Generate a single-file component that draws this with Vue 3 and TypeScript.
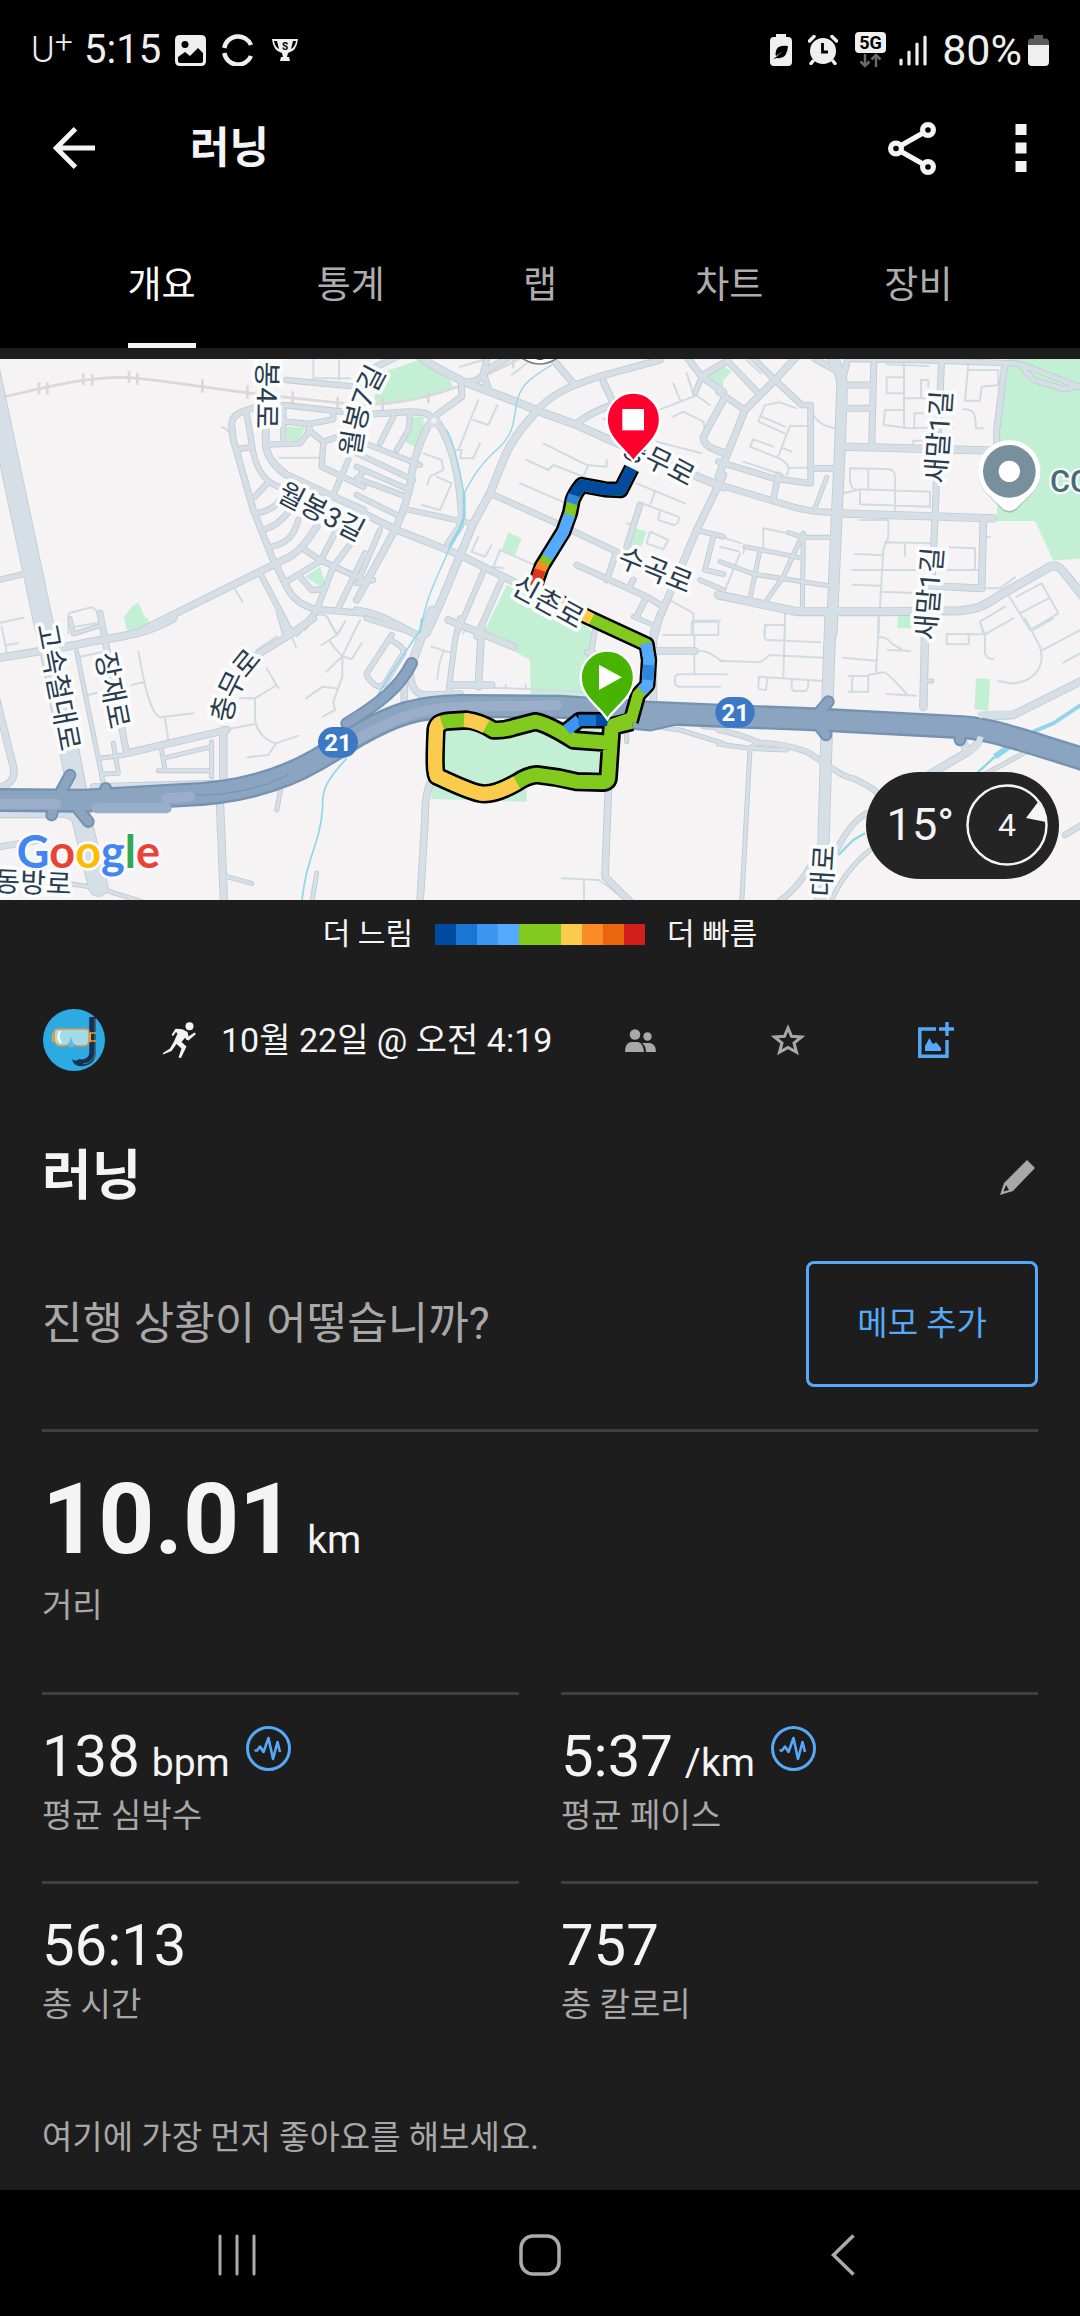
<script setup lang="ts">
import { ref } from 'vue'

interface Stroke { w: number; d: string }
interface Block { x: number; y: number; roads: Stroke[]; lanes: string; parks: string; rivers: Stroke[] }
interface RoadLabel { text: string; d: string }
interface Metric { value: string; unit?: string; label: string; chart?: boolean }

const tabs: string[] = ['개요', '통계', '랩', '차트', '장비']
const activeTab = ref<string>('개요')

const paceColors: string[] = [
  '#004a9f', '#1976d2', '#3c96f2', '#55a9ff', '#82ca1e',
  '#82ca1e', '#fbcb4d', '#fa8b26', '#ea650d', '#d3201f',
]

const metrics: Metric[] = [
  { value: '138', unit: 'bpm', label: '평균 심박수', chart: true },
  { value: '5:37', unit: '/km', label: '평균 페이스', chart: true },
  { value: '56:13', label: '총 시간' },
  { value: '757', label: '총 칼로리' },
]

// Street geometry, one block per map section
const blocks: Block[] = [
  {
    x: 0, y: 0,
    parks: 'M860 230 915 232 895 272 860 270ZM915 680 960 650 970 680 975 700 965 712ZM372 800 395 770 415 757 445 825V840H380Z',
    rivers: [],
    roads: [
      { w: 56, d: 'M-45-10 135 840' },
      { w: 14, d: 'M-10 692 70 672' },
      { w: 16, d: 'M765 172C720 185 695 195 695 225L700 270 760 480 815 620 860 710C880 750 910 770 950 778L1090 790' },
      { w: 14, d: 'M740 190 760 310C775 370 800 400 840 412M715 297 750 292M800 402 765 440M840 450C820 480 790 487 765 490M870 480C840 520 810 535 785 540M895 510C880 560 860 580 815 590' },
      { w: 18, d: 'M797 230V285C800 320 830 355 860 375L1000 440 1090 480' },
      { w: 14, d: 'M805 284 900 280 930 240 925 222 1000 208V190M850 280V165L1090 192M860 215 925 222M925 240 970 275 1090 235M970 275 965 350 1090 410M1045 330 1000 435M1090 360 1070 400' },
      { w: 18, d: 'M430 838 780 665 850 630C900 610 930 560 950 530' },
      { w: 14, d: 'M915 600 960 630 1090 690M860 695 950 640M1010 540 960 635M1060 570 1000 650 950 780M1095 610 1015 775M900 680 935 720 965 718M780 670 875 850M950 780C930 810 910 830 890 850' },
      { w: 14, d: 'M858 90 1090 112' },
    ],
    lanes: 'M940 30V85H1050M1017 30V90M665 232C685 235 690 250 695 265M838 323H960M700 710 728 755M205 850V795Q205 790 210 788L275 772C295 780 300 800 307 850M215 832 290 820M0 818 70 803M890 840 940 800Q980 780 990 820L1010 850M1035 815 1015 850',
  },
  {
    x: 1080, y: 0,
    parks: 'M40 160 60 70 190 25 270 90 280 112C230 140 150 160 40 160ZM155 200H190L192 240 165 290 135 275ZM445 547 485 565 465 618 425 600ZM825 535 860 545 840 600 800 590ZM440 705 650 800 700 850 690 1040 512 1032 510 930 465 905 370 850ZM1090 45 1025 78 1090 110Z',
    rivers: [
      { w: 4, d: 'M575 45C500 90 480 110 470 160C460 220 460 250 420 290C350 350 330 400 312 430M270 590C230 690 200 730 180 850M260 240C280 270 290 330 300 370L312 430' },
      { w: 9, d: 'M312 430V500L300 535 270 590' },
    ],
    roads: [
      { w: 20, d: 'M180 20C230 60 270 70 310 95L480 160 540 185 650 225 760 275 880 325 1090 412' },
      { w: 16, d: 'M30 60 110 20M310 95C340 100 360 90 380 60L450 20M380 30 370 70 385 115M305 100V140L230 195M40 192 150 185C190 185 210 190 220 212' },
      { w: 18, d: 'M235 220C280 290 300 380 305 500L300 530 265 580M205 225C170 290 155 350 148 420L130 480 110 530-10 750M-10 480 110 540 300 615 430 680 470 700' },
      { w: 13, d: 'M150 190 145 240 110 300M100 200 60 280M-10 270 180 345M-10 310 160 390M-10 350 150 420M-10 385 140 440M-10 435 120 500M140 478 335 520M370 665 295 840M60 540 0 680M-10 700 40 690' },
      { w: 20, d: 'M520 195C470 250 445 290 430 330L390 430 340 520 245 750 200 850' },
      { w: 15, d: 'M390 430 590 520 770 605M840 465 800 590M770 605 740 690M650 645 860 740 910 770M860 740 830 800M425 690 350 860M265 810 380 855M820 690 805 715' },
      { w: 17, d: 'M520 195C570 130 640 100 770 65L900 30M580 30 640 100M730 95 760 160M650 220C690 190 740 170 770 160M980 20 1025 80 1090 125M1090 40 1025 78M1090 150 1030 260C1030 290 1060 295 1090 310' },
      { w: 18, d: 'M1090 375 1010 540 900 800 880 850M-10 780C60 790 100 820 180 860' },
      { w: 12, d: 'M1010 540 1090 560M1060 560 1035 660 1090 672M1020 690 1090 720M1025 80 1005 130' },
    ],
    lanes: 'M355 150 295 300M340 210 385 225 412 165M300 50 370 30M455 75 500 40M550 280 680 345 740 350V330M500 330 565 360 580 345 670 380 685 345M480 400 620 460M830 400 975 460M885 425 870 465M845 460 900 480 955 500C960 515 950 525 940 525L895 510 900 480M870 545 925 570 910 598 860 580ZM355 560 335 605 375 620 395 585M420 600 535 650M420 600 400 650 430 655M190 310 245 330 250 360 210 380 202 403M230 380 275 400 240 480 185 465M285 300H305L300 325 340 325 360 280M940 100 960 150M980 70 1000 130 1050 165M870 190 1000 140M940 200 970 185 1030 215 1040 260M890 275 1025 310M930 750 1000 790V850M1000 812H1080M730 205 760 225M800 520 820 525',
  },
  {
    x: 2160, y: 0,
    parks: 'M860 27H1090V625L1000 632 945 513H830L840 200ZM0 40 35 65 0 100ZM535 795H575V835H532Z',
    rivers: [],
    roads: [
      { w: 30, d: 'M335 20Q370 80 366 110L360 290 350 500 335 850' },
      { w: 16, d: 'M285 27 345 60M385 20 370 80M462 20 455 290M370 105H455M370 175H455M665 20 645 500 630 850M855 40 830 240V300M0 405 200 465C260 485 300 485 350 488' },
      { w: 20, d: 'M370 290 820 302M360 490 820 505' },
      { w: 14, d: 'M380 27 600 30 880 40C910 40 940 60 1090 115M905 50 940 90 1035 118 1090 105' },
      { w: 18, d: 'M790 510 785 715 640 708M230 20 165 90 75 180-5 380' },
      { w: 22, d: 'M-5 735 90 755 230 785 500 785 720 782C790 775 800 760 850 730L990 650C1020 640 1025 660 1090 740' },
      { w: 15, d: 'M95 20 165 90 245 165 272 165V400L160 385-5 335M20 30 120 135M-5 125 75 180M175 375 160 445M275 355H350M-5 300 20 310' },
      { w: 10, d: 'M320 382 285 475M205 548 250 562H330M75 590 250 625M0 635 100 672 330 708M250 550 247 775M250 550 190 680 130 765M120 600 90 745' },
    ],
    lanes: 'M80 30 122 70M115 215 135 165 180 157 230 175M120 198 195 230M210 228H260M115 215 195 250M210 228 175 318M90 290 100 268 160 290M185 293 215 305M90 290 170 322C200 335 215 350 200 375M70 335 190 375M205 353H265M280 195C300 225 320 230 350 235M500 43 625 48M552 30V235M550 82H500V130H550M555 145H620M603 140V90H625V110M550 180H495L490 225 570 235 700 230M583 230V190H610M745 40 735 152H780L785 110 835 105V60H745M730 178C770 178 765 200 768 235H790M580 280V272H700M370 430 420 418 630 425V470L420 463V418M390 395V355L500 357C530 358 525 380 525 400V480M390 395C395 415 400 418 410 420M445 358V415M418 510H505V560L490 600 480 770M495 577 640 580M555 580V618M405 612 490 616M398 660 780 660M398 704 480 707M690 592 765 595V655M485 725 600 730M0 560 65 580M0 590 55 604M130 600V535L195 548M75 590 70 610M60 610 15 720M790 561H810M790 850 780 815 855 770M865 735 930 840M890 740 965 700 1015 790 930 840M900 790 985 745M800 715H840L885 682M135 850V825H195M195 790V850M475 800V850',
  },
  {
    x: 0, y: 810,
    parks: 'M372-5H445V15L385 32Z',
    rivers: [{ w: 5, d: 'M1040 415C980 480 965 510 968 560C960 680 920 700 905 850' }],
    roads: [
      { w: 56, d: 'M135 20 225 480 245 600 295 800' },
      { w: 20, d: 'M-10 115 200 80 300 60C430 42 475 20 520-5M670 330V500M660 550 672 850' },
      { w: 18, d: 'M380 400 680 330M-10 240 40 440C50 480 20 500-10 505M940-5 860 50 770 105M840-20 860 50' },
      { w: 16, d: 'M300-20 380 400M-10 584H150Q200 575 230 600M-10 682 110 662M280 500 650 490' },
      { w: 10, d: 'M230 95 310 490M340 370 355 460 310 462M300 415 375 405M485 390 495 450M490 415 635 380M475 452H635M635 365V470M842 510 830 570M680 770 755 790M950 760 935 850M200 790 300 805 440 850M210-5 220 42 300 17' },
    ],
    lanes: 'M415 95C430 180 450 280 480 292L580 280M395 195 435 185M495 295 505 360M5 20 20 95M20 75 55 70M265 225 290 218M240 110 310 95M800 145 835 205M830 195 765 235H720M765 235V300C770 330 790 360 828 370L895 347M828 370 805 405 742 412M680 328 765 312M870 40 888 80M770 90 830 50M915 30 945-5M985-5 1010 45 965 75M1010 45 1035 5M990 65C1010 95 1020 100 1027 108L980 155M1027 105V170L1000 245 1005 270 968 290M1010 205 968 200 918 235M1080 0 1027 108 1055 118 1085 70',
  },
  {
    x: 1080, y: 810,
    parks: 'M230 320H720V460L500 490V545L213 537Z',
    rivers: [{ w: 5, d: 'M185-5 180 30C150 80 100 140 45 240' }],
    roads: [
      { w: 22, d: 'M215-30 155 130' },
      { w: 13, d: 'M20-5 180 45M95 45 20 160Q20 175 45 195 60 205 75 190L130 100Q135 80 90 60M300-5 285 60 265 220M705 30 690 120M680 97H700' },
      { w: 18, d: 'M265 0 460 80M365 20 355 200M270 195H395M900-15 880 60V250M880 93H1005M150 140C150 200 165 225 200 225L300 222M133 190V260' },
      { w: 18, d: 'M210 490C195 530 195 560 195 600L180 850M745 510 735 770 815 850' },
      { w: 10, d: 'M890 320 960 330 1090 370M1000 300 1030 320 1090 325M800 300V365M820-10 880 15' },
    ],
    lanes: 'M215 80 270 98M250 95C235 130 235 150 232 178M400 203 670 215M437 195V205M497 195V205M1010 93C1050 90 1060 110 1090 125M1003 50V160M910 45H1075V5H995V45M960 163H1100M960 163Q945 163 945 175V187Q945 200 960 200H1080M605 775 715 780C750 800 780 830 800 845M672 780V850M315 30 310 40',
  },
  {
    x: 2160, y: 810,
    parks: 'M768 175 810 178 805 272 763 268ZM533-10H573V23H533Z',
    rivers: [
      { w: 12, d: 'M1090 250 1000 310 940 335' },
      { w: 18, d: 'M880 370 825 410' },
      { w: 7, d: 'M825 410 770 460M435 640 400 660 355 705' },
    ],
    roads: [
      { w: 32, d: 'M332-20 322 250M320 340 310 680 300 850' },
      { w: 20, d: 'M615 50 610 262M1090 180 880 285 800 290M780 350Q780 370 745 395L600 480M725 350 740 395' },
      { w: 14, d: 'M-5 330C50 340 90 355 115 368C180 370 220 380 260 395C320 430 360 470 400 475C440 495 480 510 490 550M440 580C400 600 370 650 350 690M270 740Q230 810 170 850M1035 645 1090 612' },
      { w: 10, d: 'M-5 372 90 385 200 390M90 385 65 850M90 385 115 365M450 690C400 730 360 780 330 850M780 470 920 395C990 395 1000 410 1090 450M625 183H635' },
    ],
    lanes: 'M195 15H145C130 15 130 60 140 60L300 67M195-5 190 170M0 122 120 127 150 105 310 113M115 170 310 183M118 172Q112 205 118 207L138 210 142 175M215 180V205Q218 213 225 213H255Q265 213 265 183M368 113 468 122M478-5 468 155M475 50Q500 50 515 70L550 92M503 90 570 93M385 168H445V215H385M398 168 395 215M445 165 490 157Q500 155 560 222M500 222 588 227M680 42H746V73H680ZM745 43H795L780 10M795 43 880-5M795 43V100Q800 118 820 117M915-5 960 80C980 150 930 190 870 190L835 183M940 30 1000-5M965 92 1090 25M1030 128 1090 95',
  },
]

const roadLabels: RoadLabel[] = [
  { text: '월봉4로', d: 'M803-42 799 236' },
  { text: '월봉7길', d: 'M1048 325C1063 240 1066 160 1138 45' },
  { text: '월봉3길', d: 'M828 415 1100 555' },
  { text: '충무로', d: 'M1870 285Q1960 320 2080 385' },
  { text: '수곡로', d: 'M1848 612 2085 708' },
  { text: '신촌로', d: 'M1532 694 1757 818' },
  { text: '새말1길', d: 'M2806 407 2826 115' },
  { text: '새말1길', d: 'M2775 877 2799 585' },
  { text: '고속철대로', d: 'M138 811 214 1211' },
  { text: '장재로', d: 'M314 896 362 1146' },
  { text: '충무로', d: 'M664 1122Q672 1000 770 905' },
  { text: '동방로', d: 'M-22 1593 220 1603' },
  { text: '대로', d: 'M2464 1646 2474 1478' },
]

const railTicks: string =
  'M117 97V133M142 97V133M250 70V106M277 72V108M387 62V98M412 68V104M607 88V128M742 106V146M878 124V160M1013 140V176M1148 142V182M1285 122V160M1540 20V55'

const motorway: string =
  'M-30 1350 250 1352 550 1335C700 1330 830 1300 950 1230L1080 1152C1180 1095 1250 1070 1380 1068L1680 1070 1950 1088 2160 1097 2440 1108 2860 1130C2960 1130 3060 1170 3260 1230'
const motorwayStubs: string =
  'M1235 940C1200 1010 1140 1060 1040 1120M210 1275 180 1330M170 1340 155 1395M200 1335 265 1415M317 1315V1370M2485 1055 2455 1090M2478 1155 2455 1125M2880 1160V1170M1900 1120 1950 1125 2040 1105'

const lap: string =
  'M1895 1115 1835 1130 1825 1280Q1825 1297 1808 1297L1730 1295Q1670 1280 1610 1274 1580 1277 1550 1298 1480 1338 1440 1330 1410 1325 1310 1278 1302 1270 1308 1140 1312 1115 1350 1113L1400 1110Q1440 1115 1480 1140 1510 1142 1540 1132L1605 1115Q1640 1120 1720 1170L1828 1178'
const returnLeg: string = 'M1895 355 1862 420 1815 418 1745 405Q1726 428 1718 450L1710 490 1690 545 1625 650 1602 715 1760 800 1940 883 1947 930 1942 1005 1914 1035 1892 1115'
const startLeg: string = 'M1695 1145 1738 1110 1826 1111'
</script>

<template>
  <div class="app">
    <div class="status">
      <div class="status-side">
        <span class="carrier">U<span class="plus">+</span></span>
        <span class="clock">5:15</span>
        <svg class="st-img" viewBox="0 0 31 31" width="31" height="31"><path fill="#efefef" fill-rule="evenodd" d="M5 0H26Q31 0 31 5V26Q31 31 26 31H5Q0 31 0 26V5Q0 0 5 0ZM10 6A3.5 3.5 0 1 0 10 13 3.500 3.500 0 1 0 10 6ZM3 22V26Q3 28 5 28H26Q28 28 28 26V18L23 13 15 21 10 17Z" /></svg>
        <svg class="st-ring" viewBox="0 0 32 32" width="32" height="32" fill="none" stroke="#efefef" stroke-width="4.500"><path d="M2.300 14A14 14 0 0 1 29 11M2.300 19A14 14 0 0 0 29 22" /></svg>
        <svg class="st-cup" viewBox="0 0 28 24" width="28" height="24"><path fill="#efefef" fill-rule="evenodd" d="M1 1H27Q26 13 17 15L16 19H18L19 23H9L10 19H12L11 15Q2 13 1 1ZM3 3Q4 9 8 11L6 3ZM25 3H22L20 11Q24 9 25 3Z" /><text x="14" y="11.500" text-anchor="middle" font-size="10" font-weight="700" fill="#000">S</text></svg>
      </div>
      <div class="status-side right">
        <svg viewBox="0 0 22 32" width="22" height="32"><path fill="#efefef" d="M6 0H16V3H18Q22 3 22 7V28Q22 32 18 32H4Q0 32 0 28V7Q0 3 4 3H6Z" /><path fill="#000" d="M18 12Q7 11 6 17 5 20 6 22L13 17 6 23 3 25 7 24Q17 26 18 12Z" /></svg>
        <svg class="st-alarm" viewBox="0 0 30 30" width="30" height="30"><circle cx="15" cy="16" r="13" fill="#efefef" /><path d="M1.500 6 6 1.500M28.500 6 24 1.500M5 26 3 28.500M25 26 27 28.500" stroke="#efefef" stroke-width="3.500" stroke-linecap="round" /><path d="M14.500 8V17H20" fill="none" stroke="#000" stroke-width="2.800" /></svg>
        <svg class="st-5g" viewBox="0 0 31 36" width="31" height="36"><rect width="31" height="21" rx="4" fill="#efefef" /><text x="15.500" y="17" text-anchor="middle" font-size="18" font-weight="700" fill="#000">5G</text><path d="M10 22V34M5.500 29.500 10 34 14.500 29.500M21 35V23M16.500 27.500 21 23 25.500 27.500" fill="none" stroke="#6a6a6a" stroke-width="2.500" /></svg>
        <svg class="st-signal" viewBox="0 0 28 31" width="28" height="31" stroke="#efefef" stroke-width="3.200" stroke-linecap="round"><path d="M2 25V29M10 17V29M18 9V29M26 2V29" /></svg>
        <span class="percent">80%</span>
        <svg class="st-batt" viewBox="0 0 21 31" width="21" height="31"><path fill="#5a5a5a" d="M6 0H15V3.500H18Q21 3.500 21 7V12H0V7Q0 3.500 3 3.500H6Z" /><path fill="#efefef" d="M0 10H21V27Q21 31 17 31H4Q0 31 0 27Z" /></svg>
      </div>
    </div>

    <header class="appbar">
      <button class="icon-btn" type="button" aria-label="뒤로">
        <svg viewBox="0 0 42 42" width="42" height="42" fill="none" stroke="#f4f4f4" stroke-width="5"><path d="M22.500 1.800 3.300 21 22.500 40.200M4 21H42" /></svg>
      </button>
      <h1>러닝</h1>
      <button class="icon-btn share" type="button" aria-label="공유">
        <svg viewBox="0 0 48 53" width="48" height="53" fill="none" stroke="#f4f4f4" stroke-width="5.200"><circle cx="8" cy="26.500" r="5.400" /><circle cx="40" cy="8" r="5.400" /><circle cx="40" cy="45" r="5.400" /><path d="M13 23.500 35 11M13 29.500 35 42" /></svg>
      </button>
      <button class="icon-btn" type="button" aria-label="더보기">
        <svg viewBox="0 0 12 48" width="12" height="48" fill="#f4f4f4"><path d="M.5 0H11.500V11H.5ZM.5 18.500H11.500V29.500H.5ZM.5 37H11.500V48H.5Z" /></svg>
      </button>
    </header>

    <nav class="tabs" role="tablist">
      <button
        v-for="tab in tabs" :key="tab" type="button" role="tab"
        :class="['tab', { active: tab === activeTab }]"
        :aria-selected="tab === activeTab" @click="activeTab = tab"
      ><span>{{ tab }}</span></button>
    </nav>

    <main class="content">
      <section class="map">
        <svg class="map-art" viewBox="0 27 3240 1623" role="img" aria-label="러닝 경로 지도">
          <rect y="27" width="3240" height="1623" fill="#f5f3f4" />
          <g fill="#c3f0d5"><path v-for="(b, i) in blocks" :key="i" :d="b.parks" :transform="`translate(${b.x} ${b.y})`" /></g>
          <g fill="none" stroke="#d9d9db">
            <path stroke-width="8" d="M0 143C150 110 250 82 370 82C450 82 600 115 860 142L1080 165C1250 165 1400 110 1560 25" />
            <path stroke-width="8" :d="railTicks" />
          </g>
          <g fill="none" stroke="#d0dbe3" stroke-width="6" stroke-linecap="round" stroke-linejoin="round">
            <path v-for="(b, i) in blocks" :key="i" :d="b.lanes" :transform="`translate(${b.x} ${b.y})`" />
          </g>
          <g fill="none" stroke="#bfcbd4" stroke-linecap="round" stroke-linejoin="round">
            <g v-for="(b, i) in blocks" :key="i" :transform="`translate(${b.x} ${b.y})`">
              <path v-for="(r, j) in b.roads" :key="j" :d="r.d" :stroke-width="r.w + 5" />
            </g>
          </g>
          <g fill="none" stroke="#d6dfe6" stroke-linecap="round" stroke-linejoin="round">
            <g v-for="(b, i) in blocks" :key="i" :transform="`translate(${b.x} ${b.y})`">
              <path v-for="(r, j) in b.roads" :key="j" :d="r.d" :stroke-width="r.w" />
            </g>
          </g>
          <circle cx="1302" cy="212" r="14" fill="#f5f3f4" stroke="#d6dfe6" stroke-width="12" />
          <g fill="none" stroke="#8fd6e9">
            <g v-for="(b, i) in blocks" :key="i" :transform="`translate(${b.x} ${b.y})`">
              <path v-for="(r, j) in b.rivers" :key="j" :d="r.d" :stroke-width="r.w" />
            </g>
          </g>
          <g fill="none" stroke-linecap="round">
            <path :d="motorwayStubs" stroke="#7592b2" stroke-width="38" />
            <path :d="motorway" stroke="#7592b2" stroke-width="72" />
            <path :d="motorway" stroke="#8ba4c0" stroke-width="58" />
            <path :d="motorwayStubs" stroke="#8ba4c0" stroke-width="26" />
            <path d="M-30 1362H170M500 1345 570 1340M1040 1185C1180 1105 1260 1075 1370 1071L1670 1066M290 1375H500" stroke="#9aaeca" stroke-width="30" />
            <path d="M590 1336Q750 1335 865 1275" stroke="#7592b2" stroke-width="3" />
          </g>
          <path d="M2935 1098Q2945 1092 2955 1092L3040 1090M2942 1160Q2935 1190 2910 1205" fill="none" stroke="#d6dfe6" stroke-width="18" />
          <path d="M1562 22Q1620 62 1675 22" fill="#fff" stroke="#7b8086" stroke-width="5" />
          <path d="M1600 22Q1620 38 1640 22Z" fill="#2c3c4f" />

          <!-- Recorded track coloured by pace -->
          <g fill="none" stroke-linejoin="round">
            <g stroke="#000">
              <path :d="returnLeg" stroke-width="49" />
              <path :d="startLeg" stroke-width="50" />
              <path :d="lap" stroke-width="58" />
            </g>
            <path :d="returnLeg" stroke="#82ca1e" stroke-width="34" />
            <path d="M1895 355 1862 420 1815 418 1745 405Q1728 425 1720 440" stroke="#004a9f" stroke-width="34" />
            <path d="M1722 435 1714 460" stroke="#2f84de" stroke-width="34" />
            <path d="M1709 494 1690 545 1642 622" stroke="#55a9ff" stroke-width="34" />
            <path d="M1632 639 1618 665" stroke="#fa8b26" stroke-width="34" />
            <path d="M1620 660 1604 708" stroke="#dc3420" stroke-width="34" />
            <path d="M1602 715 1775 807" stroke="#fbcb4d" stroke-width="34" />
            <path d="M1938 880 1947 930 1942 1005 1925 1023" stroke="#55a9ff" stroke-width="34" />
            <path d="M1947 945 1944 990" stroke="#2f84de" stroke-width="34" />
            <path :d="lap" stroke="#82ca1e" stroke-width="42" />
            <path d="M1550 1298Q1480 1338 1440 1330 1410 1325 1310 1278 1302 1270 1308 1140 1310 1122 1325 1117M1392 1110Q1425 1112 1458 1130" stroke="#fbcb4d" stroke-width="42" />
            <path d="M1700 1140 1738 1110" stroke="#3c96f2" stroke-width="34" />
            <path d="M1735 1111H1800" stroke="#1976d2" stroke-width="34" />
            <path d="M1788 1111H1830" stroke="#004a9f" stroke-width="34" />
            <path d="M1892 1105 1840 1123 1832 1180" stroke="#82ca1e" stroke-width="36" />
          </g>

          <g class="road-name">
            <template v-for="(l, i) in roadLabels" :key="i">
              <path :id="`road-${i}`" :d="l.d" fill="none" stroke="none" />
              <text dominant-baseline="central"><textPath :href="`#road-${i}`" startOffset="50%" text-anchor="middle">{{ l.text }}</textPath></text>
            </template>
          </g>
          <text class="place" x="3150" y="427">CC</text>

          <rect x="954" y="1131" width="120" height="92" rx="46" fill="#3b78c6" />
          <rect x="2146" y="1041" width="118" height="92" rx="46" fill="#3b78c6" />
          <g class="shield"><text x="1014" y="1203">21</text><text x="2206" y="1113">21</text></g>

          <path d="M1900 335C1880 300 1820 270 1820 208A80 80 0 0 1 1980 208C1980 270 1920 300 1900 335Z" fill="#fe002d" stroke="#fff" stroke-width="7" />
          <rect x="1867" y="177" width="65" height="64" fill="#fff" />
          <path d="M1822 1108C1800 1070 1742 1042 1742 982A80 80 0 0 1 1902 982C1902 1042 1845 1070 1822 1108Z" fill="#46b400" stroke="#fff" stroke-width="7" />
          <path d="M1797 944 1866 982 1797 1020Z" fill="#fff" />
          <path d="M3028 488Q3012 488 2998 470L2957 428A94 94 0 1 1 3099 428L3058 470Q3044 488 3028 488Z" fill="#5d6b6b" opacity=".35" />
          <path d="M3028 483Q3012 483 2998 466L2957 426A94 94 0 1 1 3099 426L3058 466Q3044 483 3028 483Z" fill="#fff" />
          <circle cx="3028" cy="364" r="79" fill="#78909c" />
          <circle cx="3028" cy="364" r="32" fill="#fff" />

          <text class="google" x="50" y="1554"><tspan fill="#4285f4">G</tspan><tspan fill="#ea4335">o</tspan><tspan fill="#fbbc05">o</tspan><tspan fill="#4285f4">g</tspan><tspan fill="#34a853">l</tspan><tspan fill="#ea4335">e</tspan></text>
        </svg>
        <div class="weather">
          <span class="temp">15°</span>
          <span class="wind">4
            <svg viewBox="0 0 82 82" width="82" height="82"><circle cx="41" cy="41" r="39.500" fill="none" stroke="#f4f4f4" stroke-width="2.500" /><path d="M60 34 72 18Q79 26 80 38Z" fill="#f4f4f4" /></svg>
          </span>
        </div>
      </section>

      <div class="legend">
        <span>더 느림</span>
        <div class="scale"><i v-for="(c, i) in paceColors" :key="i" :style="{ background: c }"></i></div>
        <span>더 빠름</span>
      </div>

      <section class="meta">
        <svg class="avatar" viewBox="0 0 62 62" width="62" height="62">
          <circle cx="31" cy="31" r="31" fill="#2babe2" />
          <path d="M49.500 8V44Q49 54 36 54" fill="none" stroke="#12324f" stroke-width="6.500" />
          <path d="M29 50Q33 53 36 50L42 52 36 57Q30 56 29 50Z" fill="#12324f" />
          <path d="M52 10V45Q50 54 40 55" fill="none" stroke="#5b7a92" stroke-width="1" />
          <path d="M46 24H53M46 32H53" stroke="#f0962d" stroke-width="1.500" />
          <path d="M9 24H14V33H9ZM44 24H48V33H44Z" fill="#f9a51a" />
          <path d="M15 20H43Q46 20 46 24V31Q46 37 41 37H35Q31 37 28 33 25 37 21 37H17Q11 36 11 29V24Q11 20 15 20Z" fill="#a3dbe9" stroke="#dd9146" stroke-width="1.500" />
          <path d="M16 22Q12 29 17 34L19 34Q15 28 18 22Z" fill="#fff" />
          <path d="M28 28 31 37Q28 40 25 37Z" fill="#55bfe3" />
        </svg>
        <svg class="runner" viewBox="0 0 33 36" width="33" height="36" fill="#f4f4f4"><circle cx="26.500" cy="4.200" r="4" /><path d="M8.500 13 12.500 6.800 19.500 7.200 24.500 10 25.500 14.500 31.500 10.500 33 12 25.500 18.500 23 17.500 22.300 15.500 18.500 20 23.500 24.500 18 36 15.500 35.500 18.500 26.500 13.500 22 8.500 29 0 32.500 0 31 7 26.500 11 19.500 14.500 11.500 13 10 10 14Z" /></svg>
        <span class="date">10월 22일 @ 오전 4:19</span>
        <div class="actions">
          <button class="icon-btn" type="button" aria-label="공개 범위">
            <svg viewBox="0 0 31 23" width="31" height="23" fill="#a8a8a8"><circle cx="10" cy="5.500" r="5.300" /><circle cx="22.500" cy="7.500" r="4.200" /><path d="M0 23Q0 14 6 13H13Q18 14 19 23ZM17 14H25Q31 15 31 23H21Q21 17 17 14Z" /></svg>
          </button>
          <button class="icon-btn" type="button" aria-label="즐겨찾기">
            <svg viewBox="0 0 34 32" width="34" height="32" fill="none" stroke="#a8a8a8" stroke-width="3"><path d="M17 4 20.500 12.300 30.500 13 23 19 25.500 28.300 17 23.500 8.500 28.300 11 19 3.500 13 13.500 12.300Z" /></svg>
          </button>
          <button class="icon-btn" type="button" aria-label="사진 추가">
            <svg viewBox="0 0 36 36" width="36" height="36"><path d="M18 7H1.800V34.200H29V18M21 7H36M29 0V14" fill="none" stroke="#55a9f8" stroke-width="3.400" /><path d="M7 29V24L11.500 16 14 21 16 22 18 20 23 26V29Z" fill="#55a9f8" /></svg>
          </button>
        </div>
      </section>

      <section class="heading">
        <h2>러닝</h2>
        <button class="icon-btn" type="button" aria-label="이름 편집">
          <svg viewBox="0 0 35 35" width="35" height="35"><path fill="#a8a8a8" fill-rule="evenodd" d="M27 0 35 8 13 31 0 35 4 23ZM6 25 3.500 31.500 9 30Z" /></svg>
        </button>
      </section>

      <section class="note">
        <p>진행 상황이 어떻습니까?</p>
        <button class="note-btn" type="button">메모 추가</button>
      </section>

      <section class="distance">
        <div class="value-row"><strong>10.01</strong><span class="unit">km</span></div>
        <p class="caption">거리</p>
      </section>

      <section class="metrics">
        <div v-for="m in metrics" :key="m.label" class="metric">
          <div class="value-row">
            <span class="value">{{ m.value }}</span>
            <span v-if="m.unit" class="unit">{{ m.unit }}</span>
            <button v-if="m.chart" class="icon-btn chart" type="button" :aria-label="`${m.label} 차트`">
              <svg viewBox="0 0 45 45" width="45" height="45" fill="none" stroke="#55a9f8"><circle cx="22.500" cy="22.500" r="21" stroke-width="3" /><path d="M8.500 24.500H11L14 20.500 17.500 26 22.500 12 27 33 31.500 16 34 26" stroke-width="2.600" stroke-linejoin="round" /></svg>
            </button>
          </div>
          <p class="caption">{{ m.label }}</p>
        </div>
      </section>

      <p class="caption likes">여기에 가장 먼저 좋아요를 해보세요.</p>
    </main>

    <nav class="sysnav">
      <button class="icon-btn" type="button" aria-label="최근 앱"><svg viewBox="0 0 38 42" width="38" height="42" stroke="#ababab" stroke-width="3" stroke-linecap="round"><path d="M2 2V40M19 2V40M36 2V40" /></svg></button>
      <button class="icon-btn" type="button" aria-label="홈"><svg viewBox="0 0 42 42" width="42" height="42"><rect x="2" y="2" width="38" height="38" rx="12" fill="none" stroke="#ababab" stroke-width="3.500" /></svg></button>
      <button class="icon-btn" type="button" aria-label="이전"><svg viewBox="0 0 24 42" width="24" height="42" fill="none" stroke="#ababab" stroke-width="3.500"><path d="M22.500 1.500 2.500 21 22.500 40.500" /></svg></button>
    </nav>
  </div>
</template>

<style>
body { background: #000; }
</style>

<style scoped>
.app {
  display: flex;
  flex-direction: column;
  min-height: 100vh;
  background: #000;
  color: #f4f4f4;
  font-family: Roboto, "Noto Sans CJK KR", sans-serif;
  font-size: 33px;
  line-height: 48px;
}
h1, h2, p { margin: 0; font-weight: 400; }
button { font: inherit; color: inherit; background: none; border: 0; padding: 0; cursor: pointer; }
svg { display: block; flex: none; }
.icon-btn { display: flex; align-items: center; justify-content: center; flex: none; }

.status { display: flex; justify-content: space-between; padding: 30px 31px 29px; line-height: 40px; color: #efefef; }
.status-side { display: flex; align-items: center; height: 40px; }
.carrier { display: flex; align-items: flex-start; width: 53px; font-size: 36px; font-weight: 300; }
.plus { font-size: 32px; line-height: 24px; }
.clock { width: 91px; font-size: 40px; }
.st-ring { margin-left: 16px; }
.st-cup { margin-left: 17px; }
.st-alarm { margin-left: 16px; }
.st-5g { margin-left: 17px; }
.st-signal { margin-left: 13px; }
.percent { margin-left: 15px; font-size: 43px; }
.st-batt { margin-left: 6px; }

.appbar { display: flex; align-items: center; padding: 20px 53px; }
.appbar h1 { flex: 1; margin-left: 95px; font-size: 43px; line-height: 58px; font-weight: 700; }
.share { margin-right: 79px; }

.tabs { display: grid; grid-template-columns: repeat(5, 1fr); padding: 0 67px; }
.tab { display: flex; justify-content: center; padding-top: 62px; color: #adadad; font-size: 37px; line-height: 54px; }
.tab span { padding-bottom: 30px; border-bottom: 5px solid transparent; }
.tab.active { color: #fff; }
.tab.active span { border-color: #f4f4f4; }

.content { flex: 1; padding-top: 11px; background: #1d1d1d; }
.map { position: relative; }
.map-art { width: 100%; height: auto; }
.road-name { font-size: 84px; font-weight: 400; fill: #2c3c4f; stroke: #fbfdfd; stroke-width: 22px; stroke-linejoin: round; paint-order: stroke; }
.place { font-size: 92px; font-weight: 500; fill: #4d6976; stroke: #f2fbf7; stroke-width: 14px; paint-order: stroke; }
.shield { font-size: 72px; font-weight: 700; fill: #fff; text-anchor: middle; }
.google { font-family: Lato, sans-serif; font-size: 135px; font-weight: 700; stroke: #f9fafa; stroke-width: 16px; stroke-linejoin: round; paint-order: stroke; }
.weather { position: absolute; right: 21px; bottom: 21px; display: flex; align-items: center; gap: 12px; padding: 12px 11px 13px 21px; border-radius: 54px; background: #242424; }
.temp { font-size: 45px; }
.wind { position: relative; display: flex; align-items: center; justify-content: center; width: 82px; height: 82px; font-size: 32px; }
.wind svg { position: absolute; inset: 0; }

.legend { display: flex; align-items: center; justify-content: center; gap: 22px; padding: 10px 0; font-size: 30px; }
.scale { display: flex; }
.scale i { width: 21px; height: 21px; }

.meta { display: flex; align-items: center; padding: 41px 0 0 43px; }
.runner { margin-left: 58px; }
.date { margin-left: 25px; font-size: 34px; white-space: nowrap; }
.actions { display: flex; margin-left: auto; margin-right: 70px; }
.actions .icon-btn { width: 148px; }

.heading { display: flex; align-items: center; justify-content: space-between; padding: 66px 45px 0 42px; }
.heading h2 { font-size: 54px; line-height: 80px; font-weight: 700; }

.note { display: flex; align-items: center; justify-content: space-between; margin: 44px 42px 0; padding-bottom: 42px; border-bottom: 3px solid #3f3f3f; }
.note p { color: #a8a8a8; font-size: 44px; line-height: 60px; }
.note-btn { padding: 36px 48px; border: 3px solid #55a9f8; border-radius: 8px; color: #55a9f8; }

.value-row { display: flex; align-items: baseline; gap: 12px; height: 68px; line-height: 68px; }
.unit { font-size: 39px; }
.caption { color: #a8a8a8; }
.distance { padding: 30px 42px 62px; }
.distance .value-row { height: 116px; line-height: 116px; }
.distance strong { font-size: 98px; font-weight: 700; }
.distance .caption { margin-top: 4px; }

.metrics { display: grid; grid-template-columns: 1fr 1fr; column-gap: 42px; padding: 0 42px; }
.metric { padding: 27px 0 41px; border-top: 3px solid #3f3f3f; }
.value { font-size: 58px; }
.metric .caption { margin-top: 2px; }
.chart { align-self: flex-start; margin: 4px 0 0 4px; }

.likes { padding: 44px 42px 28px; }

.sysnav { display: grid; grid-template-columns: repeat(3, 1fr); padding: 44px 86px 40px; }
</style>
